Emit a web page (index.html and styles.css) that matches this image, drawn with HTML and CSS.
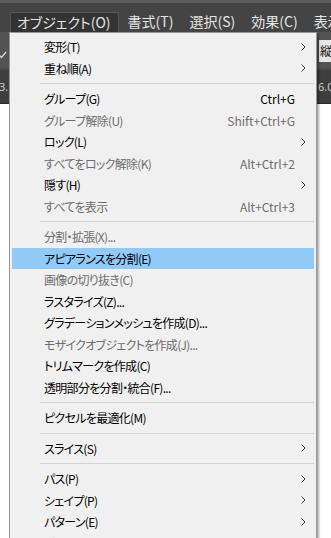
FILE: index.html
```html
<!DOCTYPE html>
<html lang="ja">
<head>
    <meta charset="UTF-8">
    <title>オブジェクト</title>
    <link rel="stylesheet" href="styles.css">
</head>
<body>
<div class="app">
    <div class="menubar">
        <span class="menubar-item active">オブジェクト(O)</span>
        <span class="menubar-item">書式(T)</span>
        <span class="menubar-item">選択(S)</span>
        <span class="menubar-item">効果(C)</span>
        <span class="menubar-item">表示(V)</span>
    </div>
    <div class="controlbar">
        <svg class="check" width="8" height="8" viewBox="0 0 8 8"><polyline points="0,4 2.5,6.5 7,1" fill="none" stroke="#d8d8d8" stroke-width="1.3"/></svg>
        <span class="textbox">縦</span>
    </div>
    <div class="fieldbar">
        <span class="field left">3.5</span>
        <span class="field right">6.0</span>
    </div>
    <div class="canvas"></div>

    <div class="dropdown">
        <div class="item"><span class="label">変形(T)</span><svg class="arrow" width="5" height="8" viewBox="0 0 5 8"><polyline points="0.5,0.5 4,4 0.5,7.5" fill="none" stroke="#333" stroke-width="1"/></svg></div>
        <div class="item"><span class="label">重ね順(A)</span><svg class="arrow" width="5" height="8" viewBox="0 0 5 8"><polyline points="0.5,0.5 4,4 0.5,7.5" fill="none" stroke="#333" stroke-width="1"/></svg></div>
        <div class="sep"></div>
        <div class="item"><span class="label">グループ(G)</span><span class="shortcut">Ctrl+G</span></div>
        <div class="item disabled"><span class="label">グループ解除(U)</span><span class="shortcut">Shift+Ctrl+G</span></div>
        <div class="item"><span class="label">ロック(L)</span><svg class="arrow" width="5" height="8" viewBox="0 0 5 8"><polyline points="0.5,0.5 4,4 0.5,7.5" fill="none" stroke="#333" stroke-width="1"/></svg></div>
        <div class="item disabled"><span class="label">すべてをロック解除(K)</span><span class="shortcut">Alt+Ctrl+2</span></div>
        <div class="item"><span class="label">隠す(H)</span><svg class="arrow" width="5" height="8" viewBox="0 0 5 8"><polyline points="0.5,0.5 4,4 0.5,7.5" fill="none" stroke="#333" stroke-width="1"/></svg></div>
        <div class="item disabled"><span class="label">すべてを表示</span><span class="shortcut">Alt+Ctrl+3</span></div>
        <div class="sep"></div>
        <div class="item disabled"><span class="label">分割・拡張(X)...</span></div>
        <div class="item selected"><span class="label">アピアランスを分割(E)</span></div>
        <div class="item disabled"><span class="label">画像の切り抜き(C)</span></div>
        <div class="item"><span class="label">ラスタライズ(Z)...</span></div>
        <div class="item"><span class="label">グラデーションメッシュを作成(D)...</span></div>
        <div class="item disabled"><span class="label">モザイクオブジェクトを作成(J)...</span></div>
        <div class="item"><span class="label">トリムマークを作成(C)</span></div>
        <div class="item"><span class="label">透明部分を分割・統合(F)...</span></div>
        <div class="sep"></div>
        <div class="item"><span class="label">ピクセルを最適化(M)</span></div>
        <div class="sep"></div>
        <div class="item"><span class="label">スライス(S)</span><svg class="arrow" width="5" height="8" viewBox="0 0 5 8"><polyline points="0.5,0.5 4,4 0.5,7.5" fill="none" stroke="#333" stroke-width="1"/></svg></div>
        <div class="sep"></div>
        <div class="item"><span class="label">パス(P)</span><svg class="arrow" width="5" height="8" viewBox="0 0 5 8"><polyline points="0.5,0.5 4,4 0.5,7.5" fill="none" stroke="#333" stroke-width="1"/></svg></div>
        <div class="item"><span class="label">シェイプ(P)</span><svg class="arrow" width="5" height="8" viewBox="0 0 5 8"><polyline points="0.5,0.5 4,4 0.5,7.5" fill="none" stroke="#333" stroke-width="1"/></svg></div>
        <div class="item"><span class="label">パターン(E)</span><svg class="arrow" width="5" height="8" viewBox="0 0 5 8"><polyline points="0.5,0.5 4,4 0.5,7.5" fill="none" stroke="#333" stroke-width="1"/></svg></div>
        <div class="item"><span class="label">ブレンド(B)</span><svg class="arrow" width="5" height="8" viewBox="0 0 5 8"><polyline points="0.5,0.5 4,4 0.5,7.5" fill="none" stroke="#333" stroke-width="1"/></svg></div>
    </div>
</div>
</body>
</html>
```

FILE: styles.css
```css
*{
    margin: 0;
    padding: 0;
    box-sizing: border-box;
}
html, body{
    width: 331px;
    height: 538px;
    overflow: hidden;
    background: #fff;
}
body{
    font-family: "Noto Sans CJK JP", "Noto Sans", sans-serif;
    font-feature-settings: "palt";
}
.app{
    position: relative;
    width: 331px;
    height: 538px;
    overflow: hidden;
}
.menubar{
    height: 32px;
    background: #444444;
    border-top: 3px solid #5b5b5b;
    display: flex;
    align-items: flex-end;
    white-space: nowrap;
    padding-left: 10px;
    font-size: 14px;
    color: #e4e4e4;
}
.menubar-item{
    height: 20px;
    line-height: 19px;
    padding: 0 8px;
}
.menubar-item.active{
    background: #333333;
    border: 1px solid #555555;
    border-bottom: none;
    border-radius: 2px 2px 0 0;
    padding: 0 7px 0 6px;
    margin-right: 1px;
}
.controlbar{
    height: 36px;
    background: #535353;
    display: flex;
    align-items: flex-start;
    justify-content: space-between;
}
.check{
    margin-top: 19px;
    margin-left: -1px;
}
.textbox{
    margin-top: 8px;
    width: 12px;
    height: 22px;
    background: #e6e6e6;
    color: #111;
    font-size: 12px;
    line-height: 22px;
    padding-left: 1px;
    overflow: hidden;
}
.fieldbar{
    height: 36px;
    background: #3e3e3e;
    border-top: 2px solid #4a4a4a;
    border-bottom: 1px solid #2a2a2a;
    display: flex;
    align-items: center;
    justify-content: space-between;
    font-family: "Noto Sans", sans-serif;
    font-size: 11px;
    color: #cfcfcf;
}
.field.left{
    margin-left: -1px;
}
.field.right{
    width: 13px;
    overflow: hidden;
}
.canvas{
    height: 434px;
    background: #ffffff;
}
.dropdown{
    position: absolute;
    left: 9px;
    top: 32px;
    width: 308px;
    background: #f0f0f0;
    border: 1px solid #979797;
    box-shadow: 2px 2px 2px rgba(0, 0, 0, 0.35);
    padding: 3px 2px;
    font-size: 12px;
    color: #000;
}
.item{
    display: flex;
    align-items: center;
    height: 21.5px;
    padding: 0 8px 0 32px;
    white-space: nowrap;
}
.item .label{
    flex: 1;
    letter-spacing: -0.7px;
}
.item .shortcut{
    margin-right: 11px;
}
.item .arrow{
    display: block;
}
.item.disabled{
    color: #6d6d6d;
}
.item.selected{
    background: #91c9f7;
}
.sep{
    height: 9px;
    margin-left: 28px;
    display: flex;
    align-items: center;
}
.sep::after{
    content: "";
    display: block;
    width: 100%;
    height: 1px;
    background: #d4d4d4;
}
```
